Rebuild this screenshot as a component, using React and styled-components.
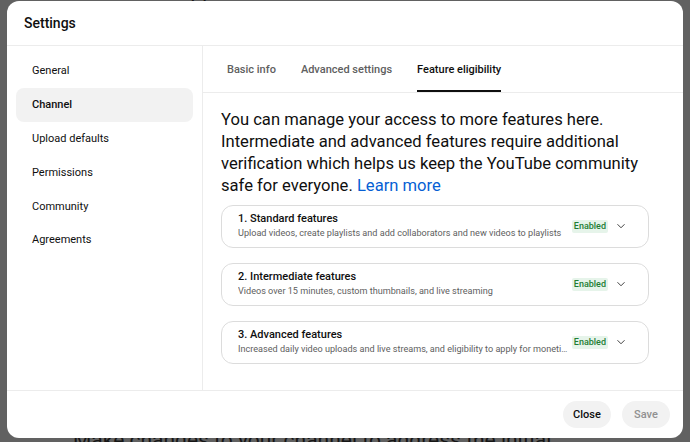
import React from 'react'
import styled, { createGlobalStyle } from 'styled-components'

const GlobalStyle = createGlobalStyle`
  html, body {
    margin: 0;
    padding: 0;
    font-family: Roboto, "Noto Sans", Arial, sans-serif;
    background: #616161;
  }
`

const Page = styled.div`
  position: relative;
  width: 690px;
  height: 442px;
  overflow: hidden;
  background: #616161;
  display: flex;
  flex-direction: column;
  justify-content: space-between;
`

// the page behind the dialog, dimmed by the scrim
const BehindLine = styled.div`
  padding-left: ${(p) => p.indent}px;
  font-size: 21px;
  line-height: 24px;
  color: #161616;
  white-space: nowrap;
  margin-top: ${(p) => p.shift || 0}px;
  margin-bottom: ${(p) => p.drop || 0}px;
`

const Dialog = styled.div`
  position: absolute;
  left: 7px;
  top: 1px;
  width: 676px;
  height: 437px;
  background: #fff;
  border-radius: 12px;
  display: flex;
  flex-direction: column;
  overflow: hidden;
  color: #0f0f0f;
`

const Header = styled.div`
  height: 44px;
  flex-shrink: 0;
  display: flex;
  align-items: center;
  padding-left: 17px;
  border-bottom: 1px solid #ececec;
  font-size: 14px;
  font-weight: 500;
`

const Body = styled.div`
  flex: 1;
  display: flex;
  min-height: 0;
`

const Sidebar = styled.nav`
  width: 195px;
  flex-shrink: 0;
  border-right: 1px solid #ececec;
  padding-top: 8px;
  display: flex;
  flex-direction: column;
`

const NavItem = styled.div`
  height: 33.8px;
  margin: 0 9px;
  padding-left: 16px;
  display: flex;
  align-items: center;
  border-radius: 8px;
  font-size: 11px;
  font-weight: ${(p) => (p.active ? 500 : 400)};
  background: ${(p) => (p.active ? '#f2f2f2' : 'transparent')};
  color: #0f0f0f;
  white-space: nowrap;
`

const Main = styled.div`
  flex: 1;
  min-width: 0;
  display: flex;
  flex-direction: column;
`

const Tabs = styled.div`
  height: 46px;
  flex-shrink: 0;
  border-bottom: 1px solid #ececec;
  display: flex;
  gap: 25px;
  padding-left: 24px;
`

const Tab = styled.div`
  display: flex;
  align-items: center;
  font-size: 11px;
  font-weight: 500;
  color: ${(p) => (p.active ? '#0f0f0f' : '#606060')};
  border-bottom: 2px solid ${(p) => (p.active ? '#0f0f0f' : 'transparent')};
  padding-top: 2px;
`

const Content = styled.div`
  padding: 16px 34px 0 18px;
  display: flex;
  flex-direction: column;
`

const Intro = styled.p`
  margin: 0 0 8px;
  font-size: 16.6px;
  line-height: 22px;
  color: #0f0f0f;
`

const Link = styled.a`
  color: #065fd4;
  text-decoration: none;
`

const Cards = styled.div`
  display: flex;
  flex-direction: column;
  gap: 15px;
`

const Card = styled.div`
  border: 1px solid #dcdcdc;
  border-radius: 12px;
  padding: 5px 21px 7px 16px;
  display: flex;
  align-items: center;
`

const CardText = styled.div`
  flex: 1;
  min-width: 0;
  margin-right: 4px;
`

const CardTitle = styled.div`
  font-size: 11px;
  line-height: 15px;
  font-weight: 500;
`

const CardDesc = styled.div`
  font-size: 9.1px;
  line-height: 14px;
  color: #606060;
  white-space: nowrap;
  overflow: hidden;
  text-overflow: ellipsis;
`

const Badge = styled.span`
  flex-shrink: 0;
  background: #e6f4ea;
  color: #1e7e34;
  font-size: 9px;
  font-weight: 500;
  line-height: 13px;
  padding: 0 2px;
  border-radius: 2px;
  margin: 2px 7px 0 0;
`

const Chevron = styled.svg`
  width: 12px;
  height: 12px;
  flex-shrink: 0;
`

const Footer = styled.div`
  height: 47px;
  flex-shrink: 0;
  border-top: 1px solid #ececec;
  display: flex;
  align-items: center;
  justify-content: flex-end;
  gap: 11px;
  padding-right: 13px;
`

const Button = styled.button`
  width: 48px;
  height: 27px;
  border: none;
  border-radius: 14px;
  background: #f2f2f2;
  font-family: inherit;
  font-size: 11px;
  font-weight: 500;
  color: ${(p) => (p.disabled ? '#909090' : '#0f0f0f')};
  padding: 0;
`

const features = [
  {
    title: '1. Standard features',
    desc: 'Upload videos, create playlists and add collaborators and new videos to playlists',
  },
  {
    title: '2. Intermediate features',
    desc: 'Videos over 15 minutes, custom thumbnails, and live streaming',
  },
  {
    title: '3. Advanced features',
    desc: 'Increased daily video uploads and live streams, and eligibility to apply for monetization, channel memberships and more',
  },
]

const navItems = ['General', 'Channel', 'Upload defaults', 'Permissions', 'Community', 'Agreements']

export default function App() {
  return (
    <>
      <GlobalStyle />
      <Page>
        <BehindLine indent={73} shift={-20}>
          Review the appeal decision and resubmit
        </BehindLine>
        <BehindLine indent={73} drop={-10}>
          Make changes to your channel to address the initial
        </BehindLine>

        <Dialog>
          <Header>Settings</Header>
          <Body>
            <Sidebar>
              {navItems.map((item) => (
                <NavItem key={item} active={item === 'Channel'}>
                  {item}
                </NavItem>
              ))}
            </Sidebar>
            <Main>
              <Tabs>
                <Tab>Basic info</Tab>
                <Tab>Advanced settings</Tab>
                <Tab active>Feature eligibility</Tab>
              </Tabs>
              <Content>
                <Intro>
                  You can manage your access to more features here. Intermediate and advanced
                  features require additional verification which helps us keep the YouTube
                  community safe for everyone. <Link href="#">Learn more</Link>
                </Intro>
                <Cards>
                  {features.map((f) => (
                    <Card key={f.title}>
                      <CardText>
                        <CardTitle>{f.title}</CardTitle>
                        <CardDesc>{f.desc}</CardDesc>
                      </CardText>
                      <Badge>Enabled</Badge>
                      <Chevron viewBox="0 0 24 24" fill="none" stroke="#0f0f0f" strokeWidth="1.6">
                        <path d="M5 8.5l7 7 7-7" />
                      </Chevron>
                    </Card>
                  ))}
                </Cards>
              </Content>
            </Main>
          </Body>
          <Footer>
            <Button>Close</Button>
            <Button disabled>Save</Button>
          </Footer>
        </Dialog>
      </Page>
    </>
  )
}
